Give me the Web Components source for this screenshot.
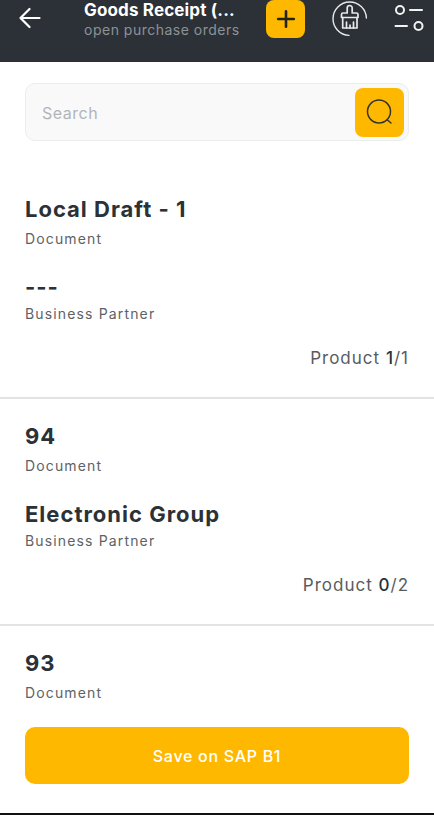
<!DOCTYPE html>
<html>
<head>
<meta charset="utf-8">
<style>
  html, body { margin: 0; padding: 0; background: #fff; }
  body { font-family: "Inter", "Liberation Sans", sans-serif; }
</style>
</head>
<body>
<receipt-app></receipt-app>

<script>
class AppHeader extends HTMLElement {
    constructor() {
        super();
        this.attachShadow({ mode: 'open' });
    }

    connectedCallback() {
        this.shadowRoot.innerHTML = `
        <style>
        :host {
            display: block;
            height: 62px;
            background: #2b3136;
            overflow: hidden;
            color: #fff;
        }
        .row {
            display: flex;
            align-items: flex-start;
            height: 62px;
        }
        .back {
            width: 84px;
            padding: 7px 0 0 19px;
            box-sizing: border-box;
            flex: none;
        }
        .titles {
            width: 182px;
            flex: none;
        }
        .title {
            font-size: 17px;
            line-height: 20px;
            font-weight: 700;
            letter-spacing: 0.15px;
            white-space: nowrap;
        }
        .sub {
            font-size: 14px;
            line-height: 20px;
            letter-spacing: 0.5px;
            color: #8d9296;
            white-space: nowrap;
        }
        .add {
            width: 39px;
            height: 38px;
            background: #ffb800;
            border-radius: 8px;
            flex: none;
            display: flex;
            align-items: center;
            justify-content: center;
        }
        .clean { margin: 0 0 0 27px; flex: none; }
        .filter { margin: 4px 0 0 26px; flex: none; }
        svg { display: block; }
        </style>
        <div class="row">
            <div class="back">
                <svg width="22" height="22" viewBox="0 0 22 22" fill="none" stroke="#fff" stroke-width="2.2" stroke-linecap="round" stroke-linejoin="round">
                    <path d="M20.500 11H1.500M10.500 2 1.500 11l9 9"/>
                </svg>
            </div>
            <div class="titles">
                <div class="title">Goods Receipt (...</div>
                <div class="sub">open purchase orders</div>
            </div>
            <div class="add">
                <svg width="20" height="20" viewBox="0 0 20 20" fill="none" stroke="#23241c" stroke-width="2.6" stroke-linecap="round">
                    <path d="M10 2.200v15.600M2.200 10h15.600"/>
                </svg>
            </div>
            <div class="clean">
                <svg width="36" height="37" viewBox="0 0 36 37" fill="none" stroke="#e8e9ea" stroke-width="1.4" stroke-linecap="round" stroke-linejoin="round">
                    <path d="M34.400 18A16.700 16.700 0 1 0 17 35.400"/>
                    <path stroke-width="1.700" d="M15.200 13V8a2.500 2.500 0 0 1 5 0v5h4.300a1.500 1.500 0 0 1 1.500 1.500V17.500H9.500v-3A1.500 1.500 0 0 1 11 13z"/>
                    <path stroke-width="1.700" d="M10.700 17.500V28H25V17.500"/>
                    <path stroke-width="1.700" d="M14.500 28v-6M18 28v-3M21.500 28v-6"/>
                </svg>
            </div>
            <div class="filter">
                <svg width="30" height="28" viewBox="0 0 30 28" fill="none" stroke="#f1f2f2" stroke-width="2" stroke-linecap="round">
                    <circle cx="6" cy="6" r="4"/>
                    <path d="M16 6h12M1.500 22H13"/>
                    <circle cx="24.500" cy="22" r="4"/>
                </svg>
            </div>
        </div>
        `;
    }
}

class SearchBox extends HTMLElement {
    constructor() {
        super();
        this.attachShadow({ mode: 'open' });
    }

    connectedCallback() {
        this.shadowRoot.innerHTML = `
        <style>
        :host {
            display: flex;
            align-items: center;
            justify-content: space-between;
            height: 58px;
            box-sizing: border-box;
            margin: 21px 25px 0;
            padding: 0 4px 0 16px;
            background: #f9f9f9;
            border: 1px solid #ededed;
            border-radius: 10px;
        }
        .placeholder {
            font-size: 16px;
            letter-spacing: 0.5px;
            color: #b1b5ba;
            margin-top: 2px;
        }
        .go {
            width: 49px;
            height: 49px;
            background: #ffb800;
            border-radius: 8px;
            display: flex;
            align-items: center;
            justify-content: center;
        }
        svg { display: block; }
        </style>
        <span class="placeholder">Search</span>
        <div class="go">
            <svg width="28" height="28" viewBox="0 0 28 28" fill="none" stroke="#33352f" stroke-width="1.500" stroke-linecap="round">
                <circle cx="13" cy="13.500" r="11.500"/>
                <path d="M21.500 22l3.500 3"/>
            </svg>
        </div>
        `;
    }
}

class OrderCard extends HTMLElement {
    constructor() {
        super();
        this.attachShadow({ mode: 'open' });
    }

    connectedCallback() {
        const doc = this.getAttribute('doc');
        const partner = this.getAttribute('partner');
        const done = this.getAttribute('done');
        const total = this.getAttribute('total');
        const partnerBlock = partner === null ? '' : `
            <div class="value second">${partner}</div>
            <div class="label">Business Partner</div>
            <div class="count">Product <b>${done}</b>/${total}</div>`;
        this.shadowRoot.innerHTML = `
        <style>
        :host {
            display: block;
            box-sizing: border-box;
            height: 227px;
            padding: 23px 25px 0;
            border-bottom: 2px solid #e3e3e3;
            color: #2b3136;
        }
        :host([last]) { border-bottom: 0; }
        .value {
            font-size: 22px;
            line-height: 28px;
            font-weight: 700;
            letter-spacing: 1px;
        }
        .second { margin-top: 25px; }
        .label {
            font-size: 14px;
            line-height: 18px;
            letter-spacing: 1.15px;
            color: #5e6266;
            margin-top: 7px;
        }
        .second + .label { margin-top: 4px; }
        .count {
            font-size: 17px;
            line-height: 20px;
            letter-spacing: 1px;
            color: #585c60;
            text-align: right;
            margin-top: 25px;
        }
        .count b { font-weight: 500; color: #2b3136; }
        </style>
        <div class="value">${doc}</div>
        <div class="label">Document</div>
        ${partnerBlock}
        `;
    }
}

class SaveButton extends HTMLElement {
    constructor() {
        super();
        this.attachShadow({ mode: 'open' });
    }

    connectedCallback() {
        this.shadowRoot.innerHTML = `
        <style>
        :host {
            position: absolute;
            left: 25px;
            right: 25px;
            bottom: 31px;
            height: 57px;
            background: #ffb800;
            border-radius: 10px;
            display: flex;
            align-items: center;
            justify-content: center;
            color: #fff;
            font-size: 16px;
            font-weight: 500;
            letter-spacing: 0.7px;
        }
        </style>
        <slot></slot>
        `;
    }
}

class ReceiptApp extends HTMLElement {
    constructor() {
        super();
        this.attachShadow({ mode: 'open' });
    }

    connectedCallback() {
        this.shadowRoot.innerHTML = `
        <style>
        :host {
            display: block;
            position: relative;
            width: 434px;
            height: 815px;
            overflow: hidden;
            background: #fff;
            font-family: "Inter", "Liberation Sans", sans-serif;
        }
        .list {
            padding-top: 31px;
            box-sizing: border-box;
            height: 672px;
            overflow: hidden;
        }
        .edge {
            position: absolute;
            left: 0;
            right: 0;
            bottom: 0;
            height: 2px;
            background: #111;
        }
        </style>
        <app-header></app-header>
        <search-box></search-box>
        <div class="list">
            <order-card doc="Local Draft - 1" partner="---" done="1" total="1"></order-card>
            <order-card doc="94" partner="Electronic Group" done="0" total="2"></order-card>
            <order-card doc="93" last></order-card>
        </div>
        <save-button>Save on SAP B1</save-button>
        <div class="edge"></div>
        `;
    }
}

customElements.define('app-header', AppHeader);
customElements.define('search-box', SearchBox);
customElements.define('order-card', OrderCard);
customElements.define('save-button', SaveButton);
customElements.define('receipt-app', ReceiptApp);
</script>
</body>
</html>
